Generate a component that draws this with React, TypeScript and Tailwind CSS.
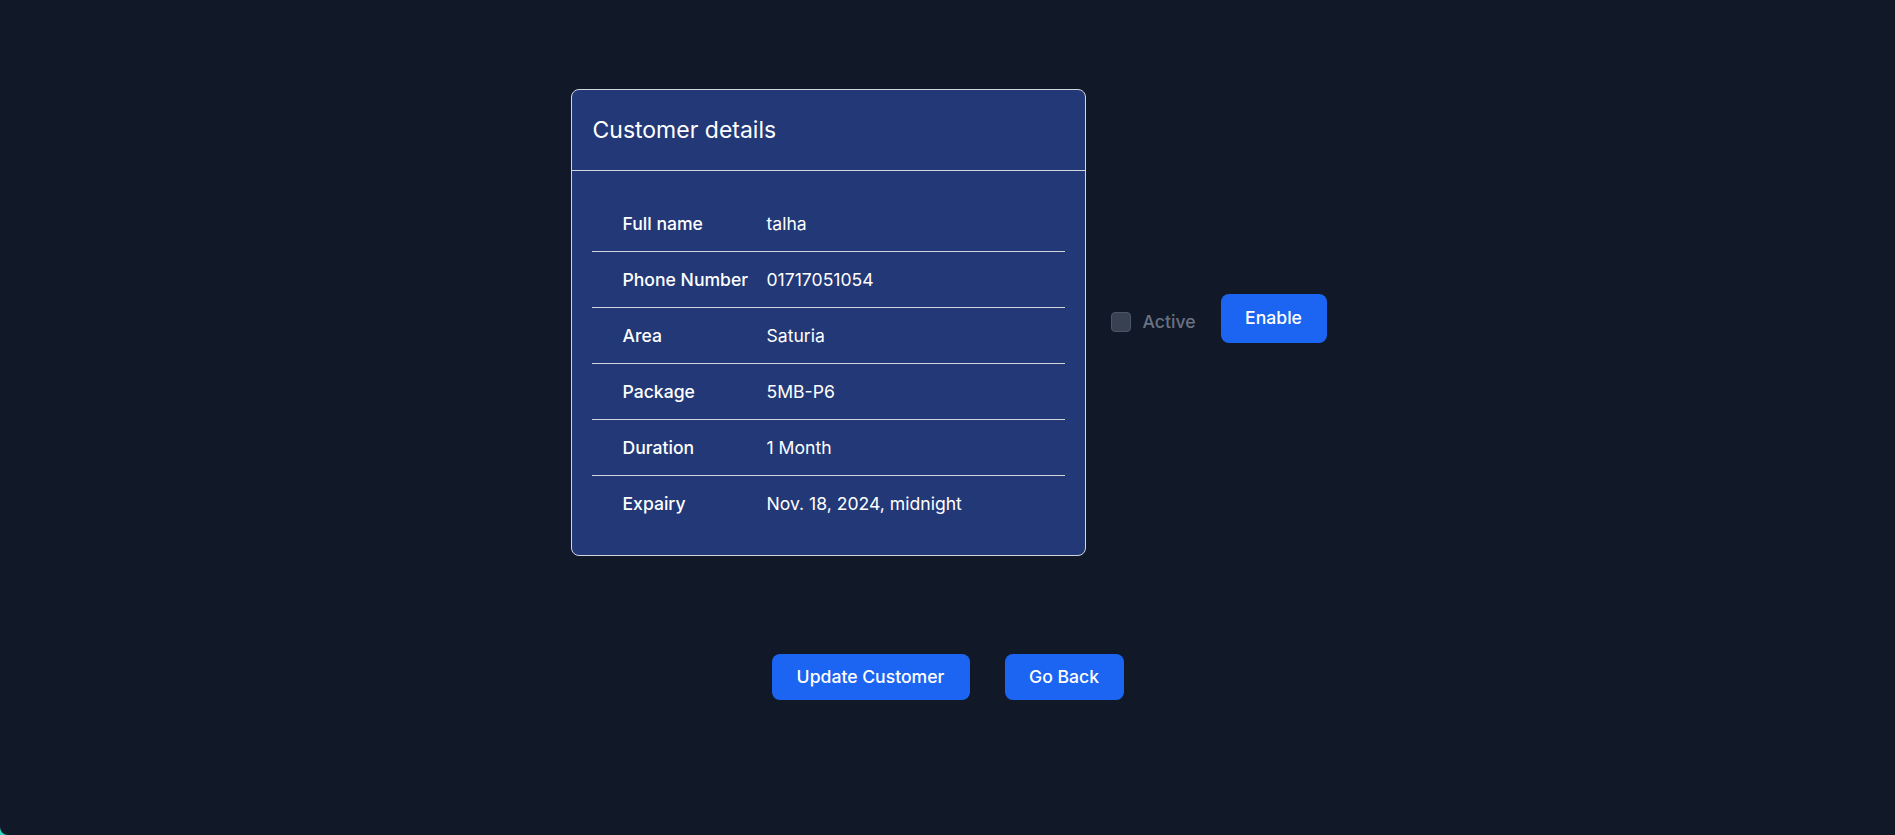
const rows = [
  { label: "Full name", value: "talha" },
  { label: "Phone Number", value: "01717051054" },
  { label: "Area", value: "Saturia" },
  { label: "Package", value: "5MB-P6" },
  { label: "Duration", value: "1 Month" },
  { label: "Expairy", value: "Nov. 18, 2024, midnight" },
];

export default function App() {
  return (
    <div className="h-[835px] w-full bg-[#2dd4bf]" style={{ fontFamily: "Inter, 'Noto Sans', sans-serif" }}>
      <div className="h-full w-full bg-[#111827] rounded-bl-[8px] flex flex-col items-center pt-[89px]">
        {/* details + status */}
        <div className="flex items-center gap-[25px] ml-[3px]">
          <div className="w-[515px] rounded-lg border border-gray-300 bg-[#233876] text-white">
            <div className="px-5 py-[26px] border-b border-gray-300">
              <h2 className="text-[23px] leading-7 font-normal">Customer details</h2>
            </div>
            <div className="px-5 pt-[25px] pb-[24px]">
              {rows.map((r, i) => (
                <div
                  key={r.label}
                  className={
                    i < rows.length - 1
                      ? "flex items-center h-[56px] pl-[30px] pt-[1px] border-b border-gray-300 text-[17.6px]"
                      : "flex items-center h-[55px] pl-[30px] pt-[1px] text-[17.6px]"
                  }
                >
                  <span className="w-36 font-medium">{r.label}</span>
                  <span>{r.value}</span>
                </div>
              ))}
            </div>
          </div>

          <label className="flex items-center gap-[11px] text-[17.6px] font-medium text-gray-500">
            <input type="checkbox" disabled className="appearance-none w-[20px] h-[20px] rounded bg-[#374151] border border-[#4b5563]" />
            Active
          </label>

          <button type="button" className="h-[49px] w-[106px] mb-[9px] rounded-lg bg-[#1c64f2] text-white text-[17.6px] font-medium">
            Enable
          </button>
        </div>

        {/* actions */}
        <div className="flex items-center gap-[35px] mt-[98px]">
          <button type="button" className="h-[46px] w-[198px] rounded-lg bg-[#1c64f2] text-white text-[17.6px] font-medium">
            Update Customer
          </button>
          <button type="button" className="h-[46px] w-[119px] rounded-lg bg-[#1c64f2] text-white text-[17.6px] font-medium">
            Go Back
          </button>
        </div>
      </div>
    </div>
  );
}
